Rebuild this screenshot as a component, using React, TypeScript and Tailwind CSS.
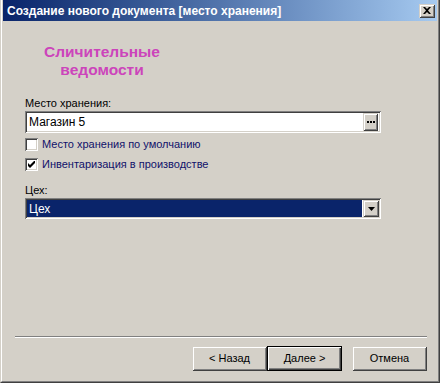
import React from "react";

const sunken =
  "shadow-[inset_1px_1px_0_#808080,inset_-1px_-1px_0_#ffffff,inset_2px_2px_0_#404040,inset_-2px_-2px_0_#d4d0c8]";
const raised =
  "shadow-[inset_1px_1px_0_#d4d0c8,inset_-1px_-1px_0_#404040,inset_2px_2px_0_#ffffff,inset_-2px_-2px_0_#808080]";

function Checkbox({ checked }: { checked?: boolean }) {
  return (
    <div className={`w-[13px] h-[13px] bg-white ${sunken} flex items-center justify-center shrink-0`}>
      {checked && (
        <svg width="7" height="7" viewBox="0 0 7 7">
          <path d="M0 2v3l2 2 5-5V-1L2 4z" fill="#000" />
        </svg>
      )}
    </div>
  );
}

function Btn({ children, focused }: { children: React.ReactNode; focused?: boolean }) {
  return (
    <div
      className={`w-[75px] h-[25px] flex items-center justify-center bg-[#d4d0c8] ${
        focused
          ? "border border-black shadow-[inset_1px_1px_0_#ffffff,inset_-1px_-1px_0_#404040,inset_-2px_-2px_0_#808080]"
          : raised
      }`}
    >
      {children}
    </div>
  );
}

export default function App() {
  return (
    <div
      className="w-[440px] h-[383px] bg-[#d4d0c8] flex flex-col text-[11px] text-black overflow-hidden"
      style={{ fontFamily: '"Liberation Sans", Arial, sans-serif' }}
    >
      <div className="flex-1 flex flex-col border-l border-l-[#d4d0c8] border-r border-r-[#404040] border-b border-b-[#404040]">
        <div className="flex-1 flex flex-col border-l border-l-white border-r border-r-[#808080] border-b border-b-[#808080] pl-[1px] pr-[1px]">
          {/* Title bar */}
          <div className="h-[21px] flex items-center justify-between bg-gradient-to-r from-[#0a246a] to-[#a6caf0] pl-[4px] pr-[2px]">
            <span className="text-white font-bold text-[12px]">
              Создание нового документа [место хранения]
            </span>
            <div className={`w-[16px] h-[14px] bg-[#d4d0c8] ${raised} flex items-center justify-center`}>
              <svg width="8" height="7" viewBox="0 0 8 7">
                <path d="M0 0h2l2 2 2-2h2L5 3.5 8 7H6L4 5 2 7H0l3-3.5z" fill="#000" />
              </svg>
            </div>
          </div>

          {/* Body */}
          <div className="flex-1 flex flex-col">
            <div className="pt-[22px] pl-[40px] w-[158px] flex flex-col items-center text-[#cc44bb] font-bold text-[15.5px] leading-[18px]">
              <span>Сличительные</span>
              <span>ведомости</span>
            </div>

            <div className="pl-[22px] pr-[56px] mt-[17px] flex flex-col">
              <div className="h-[14px] leading-[14px]">Место хранения:</div>
              <div className={`mt-[1px] h-[22px] bg-white ${sunken} flex items-center pl-[4px] pr-[3px]`}>
                <span className="flex-1 text-[12px]">Магазин 5</span>
                <div className={`w-[15px] h-[18px] bg-[#d4d0c8] ${raised} flex items-center justify-center`}>
                  <svg width="8" height="2" viewBox="0 0 8 2">
                    <rect x="0" y="0" width="2" height="2" fill="#000" />
                    <rect x="3" y="0" width="2" height="2" fill="#000" />
                    <rect x="6" y="0" width="2" height="2" fill="#000" />
                  </svg>
                </div>
              </div>

              <div className="mt-[5px] flex items-center gap-[4px] h-[13px]">
                <Checkbox />
                <span className="text-[#10106a]">Место хранения по умолчанию</span>
              </div>
              <div className="mt-[7px] flex items-center gap-[4px] h-[13px]">
                <Checkbox checked />
                <span className="text-[#10106a]">Инвентаризация в производстве</span>
              </div>

              <div className="mt-[12px] h-[14px] leading-[14px]">Цех:</div>
              <div className={`mt-[1px] h-[21px] bg-white ${sunken} flex items-center p-[2px]`}>
                <div className="flex-1 h-full bg-[#0a246a] text-white text-[12px] flex items-center pl-[2px] mr-[1px]">
                  Цех
                </div>
                <div className={`w-[16px] h-[17px] bg-[#d4d0c8] ${raised} flex items-center justify-center`}>
                  <svg width="7" height="4" viewBox="0 0 7 4">
                    <path d="M0 0h7L3.5 4z" fill="#000" />
                  </svg>
                </div>
              </div>
            </div>

            <div className="flex-1" />

            <div className="ml-[12px] mr-[10px] h-[2px] border-t border-t-[#808080] border-b border-b-white" />

            <div className="flex justify-end pr-[10px] pt-[8px] pb-[10px]">
              <Btn>&lt; Назад</Btn>
              <Btn focused>Далее &gt;</Btn>
              <div className="w-[10px]" />
              <Btn>Отмена</Btn>
            </div>
          </div>
        </div>
      </div>
    </div>
  );
}
